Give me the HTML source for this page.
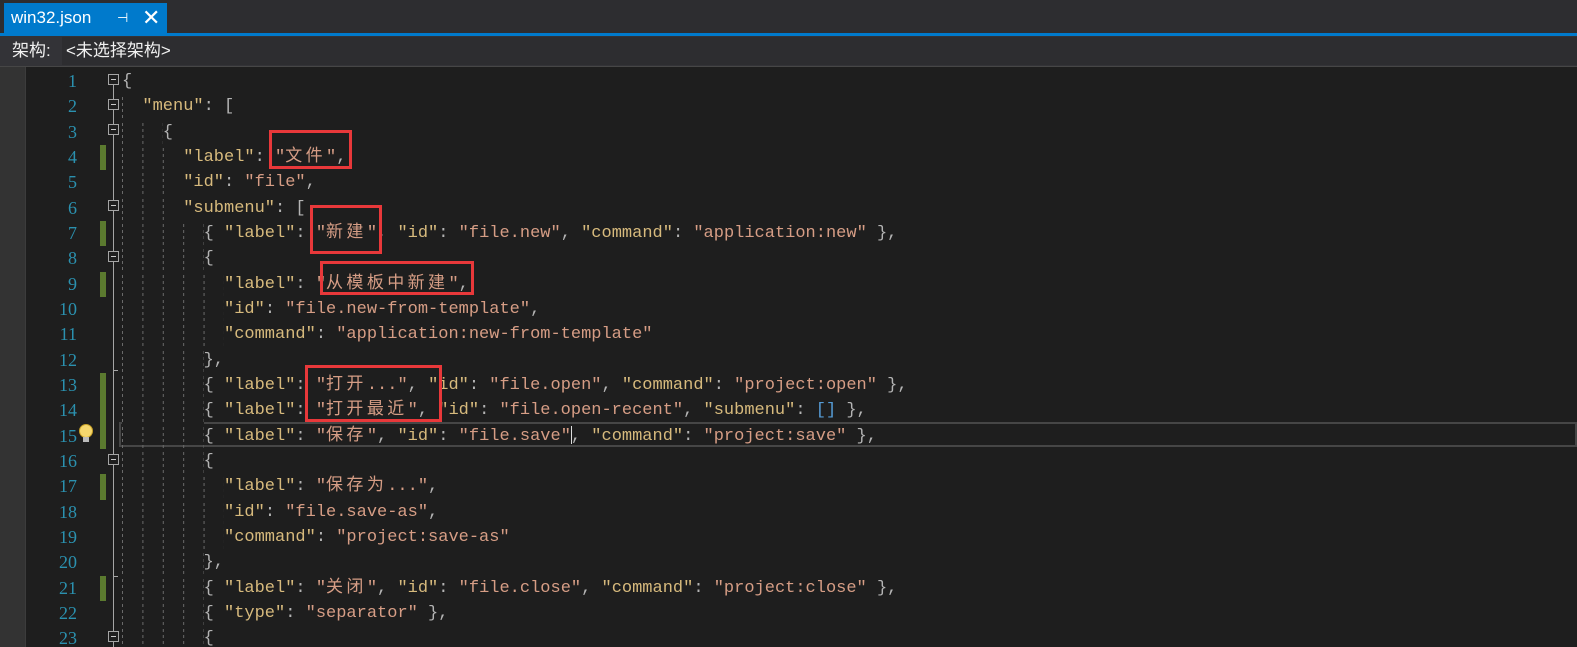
<!DOCTYPE html>
<html style="overflow:hidden"><head><meta charset="utf-8"><style>
*{margin:0;padding:0;box-sizing:border-box}
html{width:1577px;height:647px;overflow:hidden}
body{width:1577px;height:647px;overflow:hidden;background:#1e1e1e;position:relative;font-family:"Liberation Mono","Noto Sans CJK SC",monospace}
.abs{position:absolute}
#tabbar{left:0;top:0;width:1577px;height:33px;background:#2d2d30}
#tab{left:4px;top:3px;width:163px;height:30px;background:#007acc;color:#fff;font:17px "Liberation Sans",sans-serif;line-height:30px;padding-left:7px}
#blue{left:0;top:33px;width:1577px;height:3px;background:#007acc}
#nav{left:0;top:36px;width:1577px;height:31px;background:#333337;border-bottom:1px solid #464646}
#navl{left:12px;top:36px;color:#f1f1f1;font:17px "Liberation Sans","Noto Sans CJK SC",sans-serif;line-height:30px}
#combo{left:62px;top:37px;width:1515px;height:28px;background:#2d2d30;color:#f1f1f1;font:17px "Liberation Sans","Noto Sans CJK SC",sans-serif;line-height:28px;padding-left:4px}
#lm{left:0;top:67px;width:25px;height:580px;background:#333333}
#lm2{left:25px;top:67px;width:1px;height:580px;background:#3c3c3c}
#ed{position:absolute;left:0;top:69px;width:1577px;height:578px;overflow:hidden}
.ln{position:absolute;left:26px;width:51px;text-align:right;color:#2b91af;font-size:18px;font-family:"Liberation Serif",serif;height:25.33px;line-height:25.33px}
.cl{position:absolute;left:122px;white-space:pre;font-size:17px;height:25.33px;line-height:25.33px;color:#b4b4b4}
.k{color:#d7ba7d}.s{color:#d69d85}.b{color:#569cd6}
.c{letter-spacing:3.4px}
.g{display:inline-block;height:25.33px;vertical-align:top;background:linear-gradient(#1e1e1e 50%,transparent 50%) 0 0/100% 6px,linear-gradient(to right,#6a6a6a 1px,transparent 1px) 0 0/20.4px 100%}
.gb{position:absolute;left:100px;width:6px;height:25.33px;background:#5b7a2f}
.fb{position:absolute;left:108px;width:11px;height:11px;border:1px solid #a5a5a5;background:#1e1e1e}
.fb:after{content:"";position:absolute;left:2px;top:4px;width:5px;height:1px;background:#c8c8c8}
.rb{position:absolute;border:3px solid #e8383a}
</style></head><body>
<div id="tabbar" class="abs"></div>
<div id="tab" class="abs">win32.json<span style="position:absolute;left:113px;font-size:13px">⊣</span><span style="position:absolute;left:138px;font-size:22px">✕</span></div>
<div id="blue" class="abs"></div>
<div id="nav" class="abs"></div>
<div id="navl" class="abs">架构:</div>
<div id="combo" class="abs">&lt;未选择架构&gt;</div>
<div id="lm" class="abs"></div><div id="lm2" class="abs"></div>
<div class="abs" style="left:119px;top:422px;width:1458px;height:25px;border:2px solid #464646"></div>
<div class="abs" style="left:113px;top:80px;width:1px;height:567px;background:#a5a5a5"></div>
<div id="ed">
<div class="ln" style="top:0px">1</div><div class="ln" style="top:25.3px">2</div><div class="ln" style="top:50.7px">3</div><div class="ln" style="top:76px">4</div><div class="ln" style="top:101.3px">5</div><div class="ln" style="top:126.7px">6</div><div class="ln" style="top:152px">7</div><div class="ln" style="top:177.3px">8</div><div class="ln" style="top:202.7px">9</div><div class="ln" style="top:228px">10</div><div class="ln" style="top:253.3px">11</div><div class="ln" style="top:278.7px">12</div><div class="ln" style="top:304px">13</div><div class="ln" style="top:329.3px">14</div><div class="ln" style="top:354.7px">15</div><div class="ln" style="top:380px">16</div><div class="ln" style="top:405.3px">17</div><div class="ln" style="top:430.7px">18</div><div class="ln" style="top:456px">19</div><div class="ln" style="top:481.3px">20</div><div class="ln" style="top:506.7px">21</div><div class="ln" style="top:532px">22</div><div class="ln" style="top:557.3px">23</div>

<div class="cl" style="top:0px">{</div>
<div class="cl" style="top:25.3px"><span class="g" style="width:20.4px"></span><span class="k">"menu"</span>: [</div>
<div class="cl" style="top:50.7px"><span class="g" style="width:40.8px"></span>{</div>
<div class="cl" style="top:76px"><span class="g" style="width:61.2px"></span><span class="k">"label"</span>: <span class="s">"<span class="c">文件</span>"</span>,</div>
<div class="cl" style="top:101.3px"><span class="g" style="width:61.2px"></span><span class="k">"id"</span>: <span class="s">"file"</span>,</div>
<div class="cl" style="top:126.7px"><span class="g" style="width:61.2px"></span><span class="k">"submenu"</span>: [</div>
<div class="cl" style="top:152px"><span class="g" style="width:81.6px"></span>{ <span class="k">"label"</span>: <span class="s">"<span class="c">新建</span>"</span>, <span class="k">"id"</span>: <span class="s">"file.new"</span>, <span class="k">"command"</span>: <span class="s">"application:new"</span> },</div>
<div class="cl" style="top:177.3px"><span class="g" style="width:81.6px"></span>{</div>
<div class="cl" style="top:202.7px"><span class="g" style="width:102px"></span><span class="k">"label"</span>: <span class="s">"<span class="c">从模板中新建</span>"</span>,</div>
<div class="cl" style="top:228px"><span class="g" style="width:102px"></span><span class="k">"id"</span>: <span class="s">"file.new-from-template"</span>,</div>
<div class="cl" style="top:253.3px"><span class="g" style="width:102px"></span><span class="k">"command"</span>: <span class="s">"application:new-from-template"</span></div>
<div class="cl" style="top:278.7px"><span class="g" style="width:81.6px"></span>},</div>
<div class="cl" style="top:304px"><span class="g" style="width:81.6px"></span>{ <span class="k">"label"</span>: <span class="s">"<span class="c">打开</span>..."</span>, <span class="k">"id"</span>: <span class="s">"file.open"</span>, <span class="k">"command"</span>: <span class="s">"project:open"</span> },</div>
<div class="cl" style="top:329.3px"><span class="g" style="width:81.6px"></span>{ <span class="k">"label"</span>: <span class="s">"<span class="c">打开最近</span>"</span>, <span class="k">"id"</span>: <span class="s">"file.open-recent"</span>, <span class="k">"submenu"</span>: <span class="b">[]</span> },</div>
<div class="cl" style="top:354.7px"><span class="g" style="width:81.6px"></span>{ <span class="k">"label"</span>: <span class="s">"<span class="c">保存</span>"</span>, <span class="k">"id"</span>: <span class="s">"file.save"</span>, <span class="k">"command"</span>: <span class="s">"project:save"</span> },</div>
<div class="cl" style="top:380px"><span class="g" style="width:81.6px"></span>{</div>
<div class="cl" style="top:405.3px"><span class="g" style="width:102px"></span><span class="k">"label"</span>: <span class="s">"<span class="c">保存为</span>..."</span>,</div>
<div class="cl" style="top:430.7px"><span class="g" style="width:102px"></span><span class="k">"id"</span>: <span class="s">"file.save-as"</span>,</div>
<div class="cl" style="top:456px"><span class="g" style="width:102px"></span><span class="k">"command"</span>: <span class="s">"project:save-as"</span></div>
<div class="cl" style="top:481.3px"><span class="g" style="width:81.6px"></span>},</div>
<div class="cl" style="top:506.7px"><span class="g" style="width:81.6px"></span>{ <span class="k">"label"</span>: <span class="s">"<span class="c">关闭</span>"</span>, <span class="k">"id"</span>: <span class="s">"file.close"</span>, <span class="k">"command"</span>: <span class="s">"project:close"</span> },</div>
<div class="cl" style="top:532px"><span class="g" style="width:81.6px"></span>{ <span class="k">"type"</span>: <span class="s">"separator"</span> },</div>
<div class="cl" style="top:557.3px"><span class="g" style="width:81.6px"></span>{</div>
</div>

<div class="gb" style="top:145px"></div><div class="gb" style="top:221px"></div><div class="gb" style="top:271.7px"></div><div class="gb" style="top:373px;height:76px"></div><div class="gb" style="top:474.3px"></div><div class="gb" style="top:575.7px"></div>

<div class="fb" style="top:74px"></div><div class="fb" style="top:99px"></div><div class="fb" style="top:124px"></div><div class="fb" style="top:200px"></div><div class="fb" style="top:251px"></div><div class="fb" style="top:454px"></div><div class="fb" style="top:631px"></div>
<div class="abs" style="left:113px;top:370px;width:5px;height:1px;background:#a5a5a5"></div>
<div class="abs" style="left:113px;top:576px;width:5px;height:1px;background:#a5a5a5"></div>

<svg class="abs" style="left:78px;top:423px" width="16" height="22" viewBox="0 0 16 22"><circle cx="8" cy="8" r="6.5" fill="#f5d76e" stroke="#c9a227"/><rect x="5" y="14" width="6" height="5" fill="#bbb"/></svg>
<div class="abs" style="left:571px;top:426px;width:1px;height:18px;background:#ddd"></div>

<div class="rb" style="left:269px;top:130px;width:83px;height:39px"></div>
<div class="rb" style="left:310px;top:205px;width:72px;height:49px"></div>
<div class="rb" style="left:320px;top:261px;width:154px;height:34px"></div>
<div class="rb" style="left:305px;top:365px;width:137px;height:57px"></div>
</body></html>
